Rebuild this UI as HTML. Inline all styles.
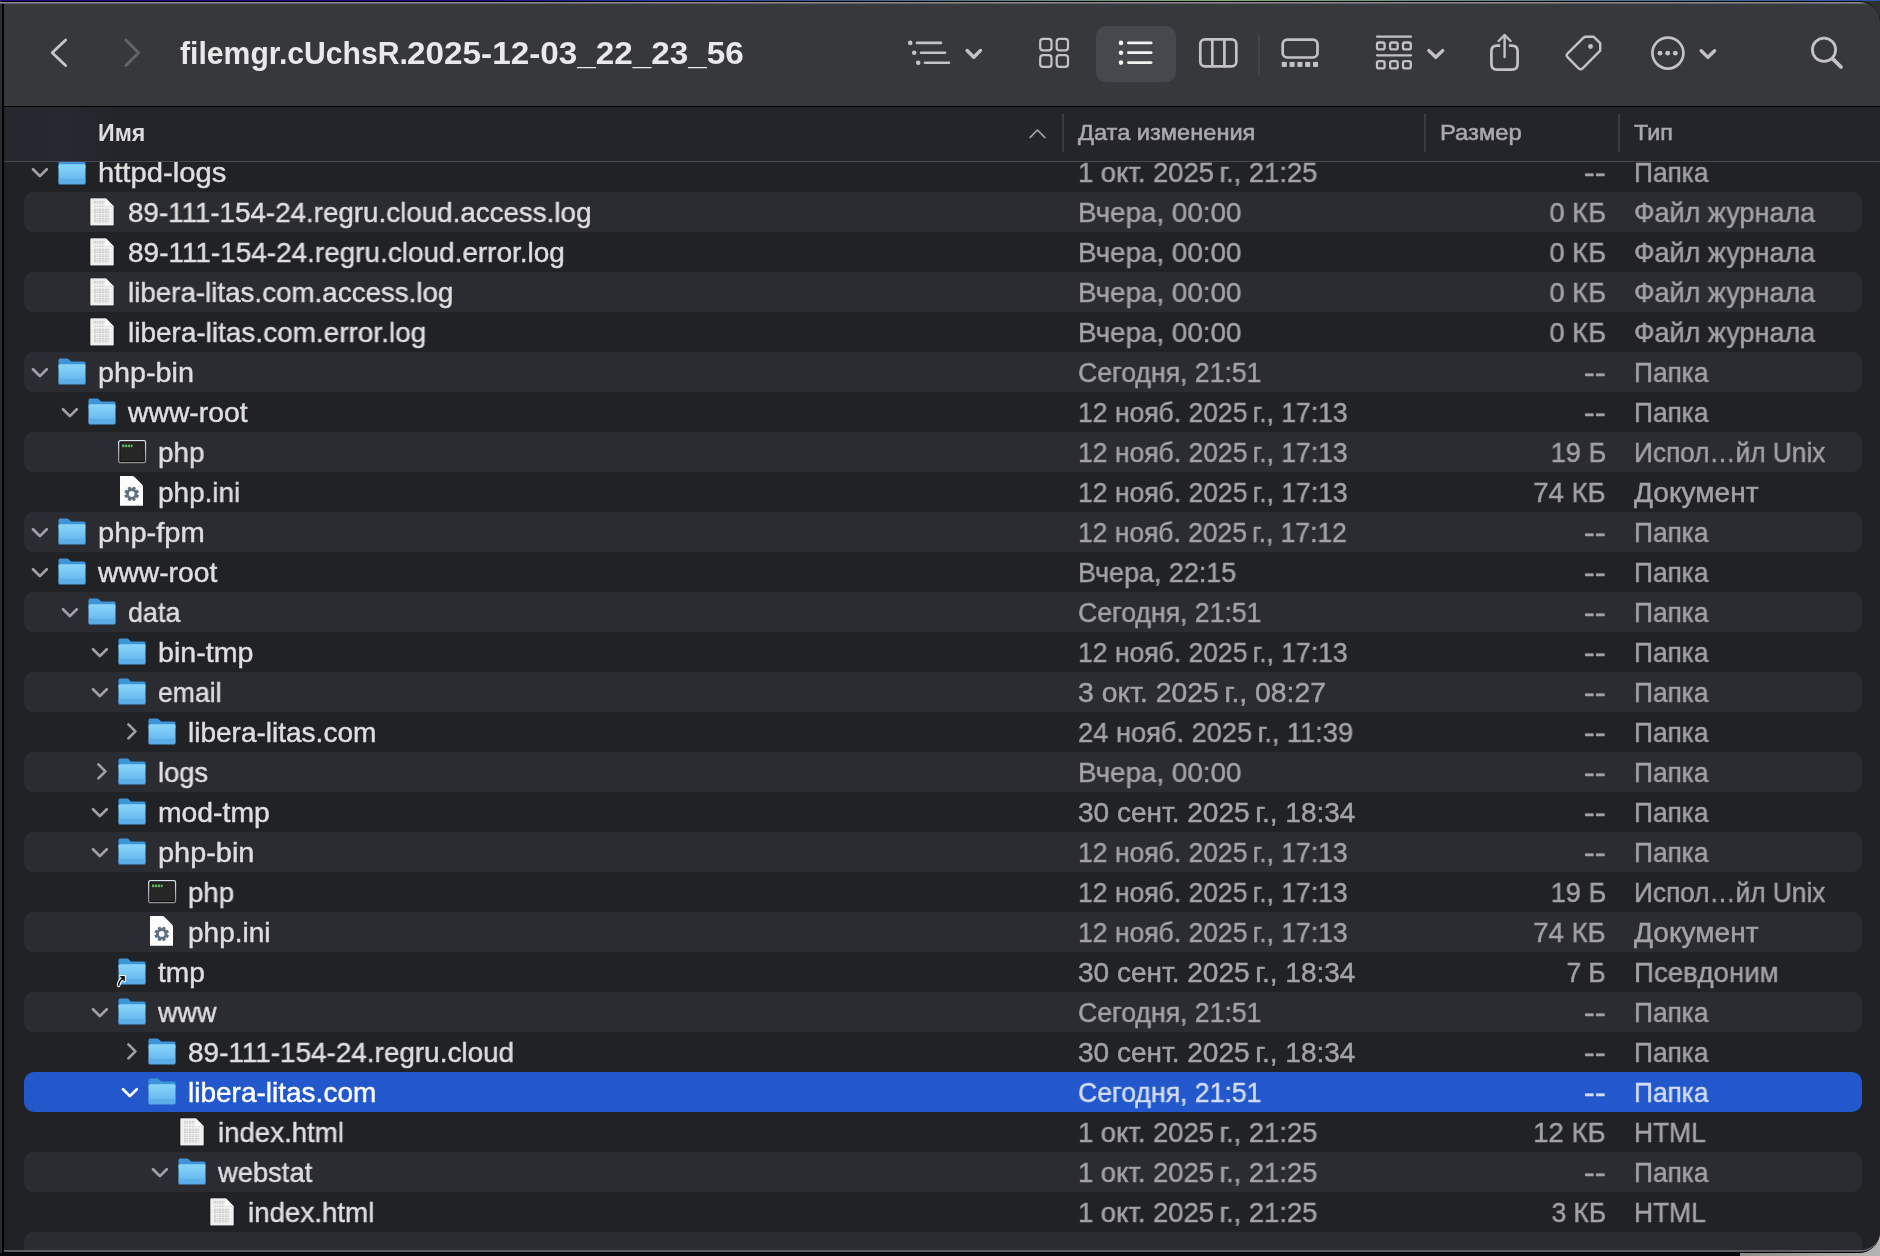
<!DOCTYPE html>
<html><head><meta charset="utf-8"><style>
html,body{margin:0;padding:0;width:1880px;height:1256px;overflow:hidden;background:#06080b;}
#trbg{position:absolute;left:1840px;top:1px;width:40px;height:40px;background:#2f3034;}
#brbg{position:absolute;left:1740px;top:1200px;width:140px;height:56px;background:linear-gradient(90deg,#8c8c8c,#b4b4b4);}
*{box-sizing:border-box;}
.ic{position:absolute;overflow:visible;}
#topline{position:absolute;left:0;top:0;width:1880px;height:1px;background:linear-gradient(90deg,#220a70 0%,#220a70 25%,#1e3aa0 35%,#86ac78 65%,#2756ac 100%);}
#leftbg{position:absolute;left:0;top:1px;width:2px;height:1252px;background:#2b2c30;}
#win{position:absolute;left:2px;top:1px;width:1878px;height:1252px;background:#000;border-radius:0 21px 21px 0;overflow:hidden;}
#inner{position:absolute;left:2px;top:1px;right:0;bottom:1px;background:#212226;border-radius:0 20px 20px 0;overflow:hidden;}
#toolbar{position:absolute;left:0;top:0;width:100%;height:104px;background:linear-gradient(180deg,#8d8d91 0px,#8d8d91 1px,#606165 1px,#606165 2px,#3d3e42 2px,#37383c 4px,#37383c 100%);}
#tbline{position:absolute;left:0;top:104px;width:100%;height:1px;background:#000;}
#header{position:absolute;left:0;top:105px;width:100%;height:55px;background:#24252b;}
#hline{position:absolute;left:0;top:159px;width:100%;height:1px;background:#48494e;}
#list{position:absolute;left:-4px;top:-2px;width:1880px;height:1256px;}
.row{position:absolute;left:24px;width:1838px;height:40px;border-radius:10px;}
.row.alt{background:#2b2c31;}
.row.sel{background:#2358cc;}
.t{position:absolute;height:40px;line-height:40px;transform-origin:left;will-change:transform;-webkit-text-stroke:0.45px currentColor;font-family:"Liberation Sans",sans-serif;font-size:28px;white-space:nowrap;}
.name{color:#dfdfdf;}
.date,.size,.kind{color:#a3a3a6;}
.t.s{color:#d3dcf3;}
.name.s{color:#ffffff;}
.h{position:absolute;top:-2.1px;height:55px;line-height:55px;transform-origin:left;will-change:transform;font-family:"Liberation Sans",sans-serif;font-size:22px;font-weight:400;-webkit-text-stroke:0.55px currentColor;color:#a9a9ad;white-space:nowrap;}
.hsep{position:absolute;top:7px;width:2px;height:38px;background:#3b3c41;}
#title{position:absolute;left:176px;top:-1.2px;height:104px;line-height:104px;will-change:transform;width:1200px;font-family:"Liberation Sans",sans-serif;font-size:32px;font-weight:700;color:#e9e9ea;white-space:nowrap;}
#bottomline{position:absolute;left:0;bottom:0;width:100%;height:22px;border-bottom:2px solid #5e5f64;border-radius:0 0 20px 0;}
</style></head><body>
<div id="topline"></div>
<div id="trbg"></div><div id="brbg"></div>
<div style="position:absolute;left:0;top:2px;width:4px;height:2px;background:linear-gradient(180deg,#8d8d91 50%,#606165 50%);z-index:5"></div>
<div id="leftbg"></div>
<div id="win"><div id="inner">
 <div id="list">
  <svg width="0" height="0" style="position:absolute"><defs>
   <linearGradient id="fg" x1="0" y1="0" x2="0" y2="1"><stop offset="0" stop-color="#8ad6fa"/><stop offset="0.6" stop-color="#6ec0f2"/><stop offset="1" stop-color="#55a8e6"/></linearGradient>
   <linearGradient id="tg" x1="0" y1="0" x2="0" y2="1"><stop offset="0" stop-color="#dce6ee"/><stop offset="1" stop-color="#8f8f8f"/></linearGradient>
  </defs></svg>
  <div class="row" style="top:152px"></div><svg class="ic" style="left:30px;top:165px" width="20" height="14" viewBox="0 0 20 14"><path d="M3 4.2 L9.9 11.1 L16.8 4.2" fill="none" stroke="#a1a1a5" stroke-width="2.7" stroke-linecap="round" stroke-linejoin="round"/></svg><svg class="ic" style="left:57px;top:156px" width="30" height="30" viewBox="0 0 30 30">
<path d="M1.5 4.2 Q1.5 2.6 3.1 2.6 L10 2.6 Q11 2.6 11.7 3.3 L13.2 4.8 Q13.9 5.5 14.9 5.5 L27 5.5 Q28.5 5.5 28.5 7 L28.5 12 L1.5 12 Z" fill="#3f93d8"/>
<rect x="1.5" y="8.2" width="27" height="20.4" rx="1.5" fill="url(#fg)"/>
<rect x="1.5" y="23" width="27" height="3.4" fill="#58a9e3" opacity="0.55"/>
</svg><div class="t name" style="left:98px;top:153px;transform:scaleX(1.0434)">httpd-logs</div><div class="t date" style="left:1078px;top:153px;transform:scaleX(0.9775)">1 окт. 2025 г., 21:25</div><div class="t size" style="right:274px;top:153px;transform:scaleX(1.1778);transform-origin:right">--</div><div class="t kind" style="left:1634px;top:153px;transform:scaleX(0.9387)">Папка</div><div class="row alt" style="top:192px"></div><svg class="ic" style="left:89px;top:197px" width="26" height="30" viewBox="0 0 26 30">
<path d="M1 2.2 Q1 1 2.2 1 L16.6 1 L25 9.4 L25 27.6 Q25 28.8 23.8 28.8 L2.2 28.8 Q1 28.8 1 27.6 Z" fill="#f0f0f0" stroke="#151517" stroke-width="0.6"/>
<path d="M5 4.6 H16" stroke="#a0a0a0" stroke-width="1" stroke-dasharray="2.2 0.6 1.4 0.7 2.6 0.6 1.8 0.8" opacity="0.5"/><path d="M5 6.1 H15" stroke="#a0a0a0" stroke-width="1" stroke-dasharray="2.2 0.6 1.4 0.7 2.6 0.6 1.8 0.8" opacity="0.5"/><path d="M5 9.2 H15.5" stroke="#a0a0a0" stroke-width="1" stroke-dasharray="2.2 0.6 1.4 0.7 2.6 0.6 1.8 0.8" opacity="0.5"/><path d="M5 12.3 H20.5" stroke="#a0a0a0" stroke-width="1" stroke-dasharray="2.2 0.6 1.4 0.7 2.6 0.6 1.8 0.8" opacity="0.5"/><path d="M5 13.9 H20.5" stroke="#a0a0a0" stroke-width="1" stroke-dasharray="2.2 0.6 1.4 0.7 2.6 0.6 1.8 0.8" opacity="0.5"/><path d="M5 15.5 H19.5" stroke="#a0a0a0" stroke-width="1" stroke-dasharray="2.2 0.6 1.4 0.7 2.6 0.6 1.8 0.8" opacity="0.5"/><path d="M5 17.8 H20" stroke="#a0a0a0" stroke-width="1" stroke-dasharray="2.2 0.6 1.4 0.7 2.6 0.6 1.8 0.8" opacity="0.5"/><path d="M5 19.4 H20.5" stroke="#a0a0a0" stroke-width="1" stroke-dasharray="2.2 0.6 1.4 0.7 2.6 0.6 1.8 0.8" opacity="0.5"/><path d="M5 21.6 H20.5" stroke="#a0a0a0" stroke-width="1" stroke-dasharray="2.2 0.6 1.4 0.7 2.6 0.6 1.8 0.8" opacity="0.5"/><path d="M5 23.2 H20.5" stroke="#a0a0a0" stroke-width="1" stroke-dasharray="2.2 0.6 1.4 0.7 2.6 0.6 1.8 0.8" opacity="0.5"/><path d="M5 24.8 H19" stroke="#a0a0a0" stroke-width="1" stroke-dasharray="2.2 0.6 1.4 0.7 2.6 0.6 1.8 0.8" opacity="0.5"/>
<path d="M16.6 1 L16.6 9.4 L25 9.4 Z" fill="#fafafa"/>
<path d="M16.6 9.4 L25 9.4" stroke="#d0d0d0" stroke-width="0.5"/>
</svg><div class="t name" style="left:128px;top:193px;transform:scaleX(0.9914)">89-111-154-24.regru.cloud.access.log</div><div class="t date" style="left:1078px;top:193px;transform:scaleX(0.9927)">Вчера, 00:00</div><div class="t size" style="right:274px;top:193px;transform:scaleX(0.9754);transform-origin:right">0 КБ</div><div class="t kind" style="left:1634px;top:193px;transform:scaleX(0.9644)">Файл журнала</div><div class="row" style="top:232px"></div><svg class="ic" style="left:89px;top:237px" width="26" height="30" viewBox="0 0 26 30">
<path d="M1 2.2 Q1 1 2.2 1 L16.6 1 L25 9.4 L25 27.6 Q25 28.8 23.8 28.8 L2.2 28.8 Q1 28.8 1 27.6 Z" fill="#f0f0f0" stroke="#151517" stroke-width="0.6"/>
<path d="M5 4.6 H16" stroke="#a0a0a0" stroke-width="1" stroke-dasharray="2.2 0.6 1.4 0.7 2.6 0.6 1.8 0.8" opacity="0.5"/><path d="M5 6.1 H15" stroke="#a0a0a0" stroke-width="1" stroke-dasharray="2.2 0.6 1.4 0.7 2.6 0.6 1.8 0.8" opacity="0.5"/><path d="M5 9.2 H15.5" stroke="#a0a0a0" stroke-width="1" stroke-dasharray="2.2 0.6 1.4 0.7 2.6 0.6 1.8 0.8" opacity="0.5"/><path d="M5 12.3 H20.5" stroke="#a0a0a0" stroke-width="1" stroke-dasharray="2.2 0.6 1.4 0.7 2.6 0.6 1.8 0.8" opacity="0.5"/><path d="M5 13.9 H20.5" stroke="#a0a0a0" stroke-width="1" stroke-dasharray="2.2 0.6 1.4 0.7 2.6 0.6 1.8 0.8" opacity="0.5"/><path d="M5 15.5 H19.5" stroke="#a0a0a0" stroke-width="1" stroke-dasharray="2.2 0.6 1.4 0.7 2.6 0.6 1.8 0.8" opacity="0.5"/><path d="M5 17.8 H20" stroke="#a0a0a0" stroke-width="1" stroke-dasharray="2.2 0.6 1.4 0.7 2.6 0.6 1.8 0.8" opacity="0.5"/><path d="M5 19.4 H20.5" stroke="#a0a0a0" stroke-width="1" stroke-dasharray="2.2 0.6 1.4 0.7 2.6 0.6 1.8 0.8" opacity="0.5"/><path d="M5 21.6 H20.5" stroke="#a0a0a0" stroke-width="1" stroke-dasharray="2.2 0.6 1.4 0.7 2.6 0.6 1.8 0.8" opacity="0.5"/><path d="M5 23.2 H20.5" stroke="#a0a0a0" stroke-width="1" stroke-dasharray="2.2 0.6 1.4 0.7 2.6 0.6 1.8 0.8" opacity="0.5"/><path d="M5 24.8 H19" stroke="#a0a0a0" stroke-width="1" stroke-dasharray="2.2 0.6 1.4 0.7 2.6 0.6 1.8 0.8" opacity="0.5"/>
<path d="M16.6 1 L16.6 9.4 L25 9.4 Z" fill="#fafafa"/>
<path d="M16.6 9.4 L25 9.4" stroke="#d0d0d0" stroke-width="0.5"/>
</svg><div class="t name" style="left:128px;top:233px;transform:scaleX(0.9975)">89-111-154-24.regru.cloud.error.log</div><div class="t date" style="left:1078px;top:233px;transform:scaleX(0.9927)">Вчера, 00:00</div><div class="t size" style="right:274px;top:233px;transform:scaleX(0.9754);transform-origin:right">0 КБ</div><div class="t kind" style="left:1634px;top:233px;transform:scaleX(0.9644)">Файл журнала</div><div class="row alt" style="top:272px"></div><svg class="ic" style="left:89px;top:277px" width="26" height="30" viewBox="0 0 26 30">
<path d="M1 2.2 Q1 1 2.2 1 L16.6 1 L25 9.4 L25 27.6 Q25 28.8 23.8 28.8 L2.2 28.8 Q1 28.8 1 27.6 Z" fill="#f0f0f0" stroke="#151517" stroke-width="0.6"/>
<path d="M5 4.6 H16" stroke="#a0a0a0" stroke-width="1" stroke-dasharray="2.2 0.6 1.4 0.7 2.6 0.6 1.8 0.8" opacity="0.5"/><path d="M5 6.1 H15" stroke="#a0a0a0" stroke-width="1" stroke-dasharray="2.2 0.6 1.4 0.7 2.6 0.6 1.8 0.8" opacity="0.5"/><path d="M5 9.2 H15.5" stroke="#a0a0a0" stroke-width="1" stroke-dasharray="2.2 0.6 1.4 0.7 2.6 0.6 1.8 0.8" opacity="0.5"/><path d="M5 12.3 H20.5" stroke="#a0a0a0" stroke-width="1" stroke-dasharray="2.2 0.6 1.4 0.7 2.6 0.6 1.8 0.8" opacity="0.5"/><path d="M5 13.9 H20.5" stroke="#a0a0a0" stroke-width="1" stroke-dasharray="2.2 0.6 1.4 0.7 2.6 0.6 1.8 0.8" opacity="0.5"/><path d="M5 15.5 H19.5" stroke="#a0a0a0" stroke-width="1" stroke-dasharray="2.2 0.6 1.4 0.7 2.6 0.6 1.8 0.8" opacity="0.5"/><path d="M5 17.8 H20" stroke="#a0a0a0" stroke-width="1" stroke-dasharray="2.2 0.6 1.4 0.7 2.6 0.6 1.8 0.8" opacity="0.5"/><path d="M5 19.4 H20.5" stroke="#a0a0a0" stroke-width="1" stroke-dasharray="2.2 0.6 1.4 0.7 2.6 0.6 1.8 0.8" opacity="0.5"/><path d="M5 21.6 H20.5" stroke="#a0a0a0" stroke-width="1" stroke-dasharray="2.2 0.6 1.4 0.7 2.6 0.6 1.8 0.8" opacity="0.5"/><path d="M5 23.2 H20.5" stroke="#a0a0a0" stroke-width="1" stroke-dasharray="2.2 0.6 1.4 0.7 2.6 0.6 1.8 0.8" opacity="0.5"/><path d="M5 24.8 H19" stroke="#a0a0a0" stroke-width="1" stroke-dasharray="2.2 0.6 1.4 0.7 2.6 0.6 1.8 0.8" opacity="0.5"/>
<path d="M16.6 1 L16.6 9.4 L25 9.4 Z" fill="#fafafa"/>
<path d="M16.6 9.4 L25 9.4" stroke="#d0d0d0" stroke-width="0.5"/>
</svg><div class="t name" style="left:128px;top:273px;transform:scaleX(0.9908)">libera-litas.com.access.log</div><div class="t date" style="left:1078px;top:273px;transform:scaleX(0.9927)">Вчера, 00:00</div><div class="t size" style="right:274px;top:273px;transform:scaleX(0.9754);transform-origin:right">0 КБ</div><div class="t kind" style="left:1634px;top:273px;transform:scaleX(0.9644)">Файл журнала</div><div class="row" style="top:312px"></div><svg class="ic" style="left:89px;top:317px" width="26" height="30" viewBox="0 0 26 30">
<path d="M1 2.2 Q1 1 2.2 1 L16.6 1 L25 9.4 L25 27.6 Q25 28.8 23.8 28.8 L2.2 28.8 Q1 28.8 1 27.6 Z" fill="#f0f0f0" stroke="#151517" stroke-width="0.6"/>
<path d="M5 4.6 H16" stroke="#a0a0a0" stroke-width="1" stroke-dasharray="2.2 0.6 1.4 0.7 2.6 0.6 1.8 0.8" opacity="0.5"/><path d="M5 6.1 H15" stroke="#a0a0a0" stroke-width="1" stroke-dasharray="2.2 0.6 1.4 0.7 2.6 0.6 1.8 0.8" opacity="0.5"/><path d="M5 9.2 H15.5" stroke="#a0a0a0" stroke-width="1" stroke-dasharray="2.2 0.6 1.4 0.7 2.6 0.6 1.8 0.8" opacity="0.5"/><path d="M5 12.3 H20.5" stroke="#a0a0a0" stroke-width="1" stroke-dasharray="2.2 0.6 1.4 0.7 2.6 0.6 1.8 0.8" opacity="0.5"/><path d="M5 13.9 H20.5" stroke="#a0a0a0" stroke-width="1" stroke-dasharray="2.2 0.6 1.4 0.7 2.6 0.6 1.8 0.8" opacity="0.5"/><path d="M5 15.5 H19.5" stroke="#a0a0a0" stroke-width="1" stroke-dasharray="2.2 0.6 1.4 0.7 2.6 0.6 1.8 0.8" opacity="0.5"/><path d="M5 17.8 H20" stroke="#a0a0a0" stroke-width="1" stroke-dasharray="2.2 0.6 1.4 0.7 2.6 0.6 1.8 0.8" opacity="0.5"/><path d="M5 19.4 H20.5" stroke="#a0a0a0" stroke-width="1" stroke-dasharray="2.2 0.6 1.4 0.7 2.6 0.6 1.8 0.8" opacity="0.5"/><path d="M5 21.6 H20.5" stroke="#a0a0a0" stroke-width="1" stroke-dasharray="2.2 0.6 1.4 0.7 2.6 0.6 1.8 0.8" opacity="0.5"/><path d="M5 23.2 H20.5" stroke="#a0a0a0" stroke-width="1" stroke-dasharray="2.2 0.6 1.4 0.7 2.6 0.6 1.8 0.8" opacity="0.5"/><path d="M5 24.8 H19" stroke="#a0a0a0" stroke-width="1" stroke-dasharray="2.2 0.6 1.4 0.7 2.6 0.6 1.8 0.8" opacity="0.5"/>
<path d="M16.6 1 L16.6 9.4 L25 9.4 Z" fill="#fafafa"/>
<path d="M16.6 9.4 L25 9.4" stroke="#d0d0d0" stroke-width="0.5"/>
</svg><div class="t name" style="left:128px;top:313px;transform:scaleX(0.9980)">libera-litas.com.error.log</div><div class="t date" style="left:1078px;top:313px;transform:scaleX(0.9927)">Вчера, 00:00</div><div class="t size" style="right:274px;top:313px;transform:scaleX(0.9754);transform-origin:right">0 КБ</div><div class="t kind" style="left:1634px;top:313px;transform:scaleX(0.9644)">Файл журнала</div><div class="row alt" style="top:352px"></div><svg class="ic" style="left:30px;top:365px" width="20" height="14" viewBox="0 0 20 14"><path d="M3 4.2 L9.9 11.1 L16.8 4.2" fill="none" stroke="#a1a1a5" stroke-width="2.7" stroke-linecap="round" stroke-linejoin="round"/></svg><svg class="ic" style="left:57px;top:356px" width="30" height="30" viewBox="0 0 30 30">
<path d="M1.5 4.2 Q1.5 2.6 3.1 2.6 L10 2.6 Q11 2.6 11.7 3.3 L13.2 4.8 Q13.9 5.5 14.9 5.5 L27 5.5 Q28.5 5.5 28.5 7 L28.5 12 L1.5 12 Z" fill="#3f93d8"/>
<rect x="1.5" y="8.2" width="27" height="20.4" rx="1.5" fill="url(#fg)"/>
<rect x="1.5" y="23" width="27" height="3.4" fill="#58a9e3" opacity="0.55"/>
</svg><div class="t name" style="left:98px;top:353px;transform:scaleX(1.0272)">php-bin</div><div class="t date" style="left:1078px;top:353px;transform:scaleX(0.9510)">Сегодня, 21:51</div><div class="t size" style="right:274px;top:353px;transform:scaleX(1.1778);transform-origin:right">--</div><div class="t kind" style="left:1634px;top:353px;transform:scaleX(0.9387)">Папка</div><div class="row" style="top:392px"></div><svg class="ic" style="left:60px;top:405px" width="20" height="14" viewBox="0 0 20 14"><path d="M3 4.2 L9.9 11.1 L16.8 4.2" fill="none" stroke="#a1a1a5" stroke-width="2.7" stroke-linecap="round" stroke-linejoin="round"/></svg><svg class="ic" style="left:87px;top:396px" width="30" height="30" viewBox="0 0 30 30">
<path d="M1.5 4.2 Q1.5 2.6 3.1 2.6 L10 2.6 Q11 2.6 11.7 3.3 L13.2 4.8 Q13.9 5.5 14.9 5.5 L27 5.5 Q28.5 5.5 28.5 7 L28.5 12 L1.5 12 Z" fill="#3f93d8"/>
<rect x="1.5" y="8.2" width="27" height="20.4" rx="1.5" fill="url(#fg)"/>
<rect x="1.5" y="23" width="27" height="3.4" fill="#58a9e3" opacity="0.55"/>
</svg><div class="t name" style="left:128px;top:393px;transform:scaleX(1.0109)">www-root</div><div class="t date" style="left:1078px;top:393px;transform:scaleX(0.9465)">12 нояб. 2025 г., 17:13</div><div class="t size" style="right:274px;top:393px;transform:scaleX(1.1778);transform-origin:right">--</div><div class="t kind" style="left:1634px;top:393px;transform:scaleX(0.9387)">Папка</div><div class="row alt" style="top:432px"></div><svg class="ic" style="left:118px;top:440px" width="30" height="26" viewBox="0 0 30 26">
<rect x="0.7" y="0.7" width="26.8" height="22" rx="1.6" fill="#0a0a0a" stroke="url(#tg)" stroke-width="1.3"/>
<rect x="2.3" y="2.3" width="23.6" height="18.8" fill="#262626"/>
<g fill="#5cba5c"><rect x="4" y="4.6" width="2.3" height="2.6" rx="0.8"/><rect x="6.9" y="4.4" width="2.5" height="2.8" rx="1"/><rect x="9.9" y="4.4" width="2.5" height="2.8" rx="1"/><rect x="13" y="4.6" width="1.6" height="2.6" rx="0.6"/></g>
</svg><div class="t name" style="left:158px;top:433px;transform:scaleX(0.9935)">php</div><div class="t date" style="left:1078px;top:433px;transform:scaleX(0.9465)">12 нояб. 2025 г., 17:13</div><div class="t size" style="right:274px;top:433px;transform:scaleX(0.9709);transform-origin:right">19 Б</div><div class="t kind" style="left:1634px;top:433px;transform:scaleX(0.9363)">Испол…йл Unix</div><div class="row" style="top:472px"></div><svg class="ic" style="left:119px;top:475px" width="26" height="32" viewBox="0 0 26 32">
<path d="M1 1 L13 1 Q14.6 1 15.8 2.2 L22.6 9 Q24 10.4 24 12 L24 30.8 L1 30.8 Z" fill="#fdfdfd"/>
<rect x="11.1" y="11.6" width="3.2" height="3.6" rx="0.6" fill="#5f717d" transform="rotate(22.5 12.7 18.9)"/><rect x="11.1" y="11.6" width="3.2" height="3.6" rx="0.6" fill="#5f717d" transform="rotate(67.5 12.7 18.9)"/><rect x="11.1" y="11.6" width="3.2" height="3.6" rx="0.6" fill="#5f717d" transform="rotate(112.5 12.7 18.9)"/><rect x="11.1" y="11.6" width="3.2" height="3.6" rx="0.6" fill="#5f717d" transform="rotate(157.5 12.7 18.9)"/><rect x="11.1" y="11.6" width="3.2" height="3.6" rx="0.6" fill="#5f717d" transform="rotate(202.5 12.7 18.9)"/><rect x="11.1" y="11.6" width="3.2" height="3.6" rx="0.6" fill="#5f717d" transform="rotate(247.5 12.7 18.9)"/><rect x="11.1" y="11.6" width="3.2" height="3.6" rx="0.6" fill="#5f717d" transform="rotate(292.5 12.7 18.9)"/><rect x="11.1" y="11.6" width="3.2" height="3.6" rx="0.6" fill="#5f717d" transform="rotate(337.5 12.7 18.9)"/>
<circle cx="12.7" cy="18.9" r="4.2" fill="none" stroke="#5f717d" stroke-width="2.7"/>
</svg><div class="t name" style="left:158px;top:473px;transform:scaleX(0.9963)">php.ini</div><div class="t date" style="left:1078px;top:473px;transform:scaleX(0.9465)">12 нояб. 2025 г., 17:13</div><div class="t size" style="right:274px;top:473px;transform:scaleX(0.9836);transform-origin:right">74 КБ</div><div class="t kind" style="left:1634px;top:473px;transform:scaleX(1.0032)">Документ</div><div class="row alt" style="top:512px"></div><svg class="ic" style="left:30px;top:525px" width="20" height="14" viewBox="0 0 20 14"><path d="M3 4.2 L9.9 11.1 L16.8 4.2" fill="none" stroke="#a1a1a5" stroke-width="2.7" stroke-linecap="round" stroke-linejoin="round"/></svg><svg class="ic" style="left:57px;top:516px" width="30" height="30" viewBox="0 0 30 30">
<path d="M1.5 4.2 Q1.5 2.6 3.1 2.6 L10 2.6 Q11 2.6 11.7 3.3 L13.2 4.8 Q13.9 5.5 14.9 5.5 L27 5.5 Q28.5 5.5 28.5 7 L28.5 12 L1.5 12 Z" fill="#3f93d8"/>
<rect x="1.5" y="8.2" width="27" height="20.4" rx="1.5" fill="url(#fg)"/>
<rect x="1.5" y="23" width="27" height="3.4" fill="#58a9e3" opacity="0.55"/>
</svg><div class="t name" style="left:98px;top:513px;transform:scaleX(1.0396)">php-fpm</div><div class="t date" style="left:1078px;top:513px;transform:scaleX(0.9437)">12 нояб. 2025 г., 17:12</div><div class="t size" style="right:274px;top:513px;transform:scaleX(1.1778);transform-origin:right">--</div><div class="t kind" style="left:1634px;top:513px;transform:scaleX(0.9387)">Папка</div><div class="row" style="top:552px"></div><svg class="ic" style="left:30px;top:565px" width="20" height="14" viewBox="0 0 20 14"><path d="M3 4.2 L9.9 11.1 L16.8 4.2" fill="none" stroke="#a1a1a5" stroke-width="2.7" stroke-linecap="round" stroke-linejoin="round"/></svg><svg class="ic" style="left:57px;top:556px" width="30" height="30" viewBox="0 0 30 30">
<path d="M1.5 4.2 Q1.5 2.6 3.1 2.6 L10 2.6 Q11 2.6 11.7 3.3 L13.2 4.8 Q13.9 5.5 14.9 5.5 L27 5.5 Q28.5 5.5 28.5 7 L28.5 12 L1.5 12 Z" fill="#3f93d8"/>
<rect x="1.5" y="8.2" width="27" height="20.4" rx="1.5" fill="url(#fg)"/>
<rect x="1.5" y="23" width="27" height="3.4" fill="#58a9e3" opacity="0.55"/>
</svg><div class="t name" style="left:98px;top:553px;transform:scaleX(1.0084)">www-root</div><div class="t date" style="left:1078px;top:553px;transform:scaleX(0.9610)">Вчера, 22:15</div><div class="t size" style="right:274px;top:553px;transform:scaleX(1.1778);transform-origin:right">--</div><div class="t kind" style="left:1634px;top:553px;transform:scaleX(0.9387)">Папка</div><div class="row alt" style="top:592px"></div><svg class="ic" style="left:60px;top:605px" width="20" height="14" viewBox="0 0 20 14"><path d="M3 4.2 L9.9 11.1 L16.8 4.2" fill="none" stroke="#a1a1a5" stroke-width="2.7" stroke-linecap="round" stroke-linejoin="round"/></svg><svg class="ic" style="left:87px;top:596px" width="30" height="30" viewBox="0 0 30 30">
<path d="M1.5 4.2 Q1.5 2.6 3.1 2.6 L10 2.6 Q11 2.6 11.7 3.3 L13.2 4.8 Q13.9 5.5 14.9 5.5 L27 5.5 Q28.5 5.5 28.5 7 L28.5 12 L1.5 12 Z" fill="#3f93d8"/>
<rect x="1.5" y="8.2" width="27" height="20.4" rx="1.5" fill="url(#fg)"/>
<rect x="1.5" y="23" width="27" height="3.4" fill="#58a9e3" opacity="0.55"/>
</svg><div class="t name" style="left:128px;top:593px;transform:scaleX(0.9600)">data</div><div class="t date" style="left:1078px;top:593px;transform:scaleX(0.9510)">Сегодня, 21:51</div><div class="t size" style="right:274px;top:593px;transform:scaleX(1.1778);transform-origin:right">--</div><div class="t kind" style="left:1634px;top:593px;transform:scaleX(0.9387)">Папка</div><div class="row" style="top:632px"></div><svg class="ic" style="left:90px;top:645px" width="20" height="14" viewBox="0 0 20 14"><path d="M3 4.2 L9.9 11.1 L16.8 4.2" fill="none" stroke="#a1a1a5" stroke-width="2.7" stroke-linecap="round" stroke-linejoin="round"/></svg><svg class="ic" style="left:117px;top:636px" width="30" height="30" viewBox="0 0 30 30">
<path d="M1.5 4.2 Q1.5 2.6 3.1 2.6 L10 2.6 Q11 2.6 11.7 3.3 L13.2 4.8 Q13.9 5.5 14.9 5.5 L27 5.5 Q28.5 5.5 28.5 7 L28.5 12 L1.5 12 Z" fill="#3f93d8"/>
<rect x="1.5" y="8.2" width="27" height="20.4" rx="1.5" fill="url(#fg)"/>
<rect x="1.5" y="23" width="27" height="3.4" fill="#58a9e3" opacity="0.55"/>
</svg><div class="t name" style="left:158px;top:633px;transform:scaleX(1.0215)">bin-tmp</div><div class="t date" style="left:1078px;top:633px;transform:scaleX(0.9465)">12 нояб. 2025 г., 17:13</div><div class="t size" style="right:274px;top:633px;transform:scaleX(1.1778);transform-origin:right">--</div><div class="t kind" style="left:1634px;top:633px;transform:scaleX(0.9387)">Папка</div><div class="row alt" style="top:672px"></div><svg class="ic" style="left:90px;top:685px" width="20" height="14" viewBox="0 0 20 14"><path d="M3 4.2 L9.9 11.1 L16.8 4.2" fill="none" stroke="#a1a1a5" stroke-width="2.7" stroke-linecap="round" stroke-linejoin="round"/></svg><svg class="ic" style="left:117px;top:676px" width="30" height="30" viewBox="0 0 30 30">
<path d="M1.5 4.2 Q1.5 2.6 3.1 2.6 L10 2.6 Q11 2.6 11.7 3.3 L13.2 4.8 Q13.9 5.5 14.9 5.5 L27 5.5 Q28.5 5.5 28.5 7 L28.5 12 L1.5 12 Z" fill="#3f93d8"/>
<rect x="1.5" y="8.2" width="27" height="20.4" rx="1.5" fill="url(#fg)"/>
<rect x="1.5" y="23" width="27" height="3.4" fill="#58a9e3" opacity="0.55"/>
</svg><div class="t name" style="left:158px;top:673px;transform:scaleX(0.9485)">email</div><div class="t date" style="left:1078px;top:673px;transform:scaleX(1.0127)">3 окт. 2025 г., 08:27</div><div class="t size" style="right:274px;top:673px;transform:scaleX(1.1778);transform-origin:right">--</div><div class="t kind" style="left:1634px;top:673px;transform:scaleX(0.9387)">Папка</div><div class="row" style="top:712px"></div><svg class="ic" style="left:123px;top:722px" width="14" height="20" viewBox="0 0 14 20"><path d="M5.4 2.4 L12.4 9.4 L5.4 16.4" fill="none" stroke="#a1a1a5" stroke-width="2.7" stroke-linecap="round" stroke-linejoin="round"/></svg><svg class="ic" style="left:147px;top:716px" width="30" height="30" viewBox="0 0 30 30">
<path d="M1.5 4.2 Q1.5 2.6 3.1 2.6 L10 2.6 Q11 2.6 11.7 3.3 L13.2 4.8 Q13.9 5.5 14.9 5.5 L27 5.5 Q28.5 5.5 28.5 7 L28.5 12 L1.5 12 Z" fill="#3f93d8"/>
<rect x="1.5" y="8.2" width="27" height="20.4" rx="1.5" fill="url(#fg)"/>
<rect x="1.5" y="23" width="27" height="3.4" fill="#58a9e3" opacity="0.55"/>
</svg><div class="t name" style="left:188px;top:713px;transform:scaleX(1.0000)">libera-litas.com</div><div class="t date" style="left:1078px;top:713px;transform:scaleX(0.9730)">24 нояб. 2025 г., 11:39</div><div class="t size" style="right:274px;top:713px;transform:scaleX(1.1778);transform-origin:right">--</div><div class="t kind" style="left:1634px;top:713px;transform:scaleX(0.9387)">Папка</div><div class="row alt" style="top:752px"></div><svg class="ic" style="left:93px;top:762px" width="14" height="20" viewBox="0 0 14 20"><path d="M5.4 2.4 L12.4 9.4 L5.4 16.4" fill="none" stroke="#a1a1a5" stroke-width="2.7" stroke-linecap="round" stroke-linejoin="round"/></svg><svg class="ic" style="left:117px;top:756px" width="30" height="30" viewBox="0 0 30 30">
<path d="M1.5 4.2 Q1.5 2.6 3.1 2.6 L10 2.6 Q11 2.6 11.7 3.3 L13.2 4.8 Q13.9 5.5 14.9 5.5 L27 5.5 Q28.5 5.5 28.5 7 L28.5 12 L1.5 12 Z" fill="#3f93d8"/>
<rect x="1.5" y="8.2" width="27" height="20.4" rx="1.5" fill="url(#fg)"/>
<rect x="1.5" y="23" width="27" height="3.4" fill="#58a9e3" opacity="0.55"/>
</svg><div class="t name" style="left:158px;top:753px;transform:scaleX(0.9765)">logs</div><div class="t date" style="left:1078px;top:753px;transform:scaleX(0.9927)">Вчера, 00:00</div><div class="t size" style="right:274px;top:753px;transform:scaleX(1.1778);transform-origin:right">--</div><div class="t kind" style="left:1634px;top:753px;transform:scaleX(0.9387)">Папка</div><div class="row" style="top:792px"></div><svg class="ic" style="left:90px;top:805px" width="20" height="14" viewBox="0 0 20 14"><path d="M3 4.2 L9.9 11.1 L16.8 4.2" fill="none" stroke="#a1a1a5" stroke-width="2.7" stroke-linecap="round" stroke-linejoin="round"/></svg><svg class="ic" style="left:117px;top:796px" width="30" height="30" viewBox="0 0 30 30">
<path d="M1.5 4.2 Q1.5 2.6 3.1 2.6 L10 2.6 Q11 2.6 11.7 3.3 L13.2 4.8 Q13.9 5.5 14.9 5.5 L27 5.5 Q28.5 5.5 28.5 7 L28.5 12 L1.5 12 Z" fill="#3f93d8"/>
<rect x="1.5" y="8.2" width="27" height="20.4" rx="1.5" fill="url(#fg)"/>
<rect x="1.5" y="23" width="27" height="3.4" fill="#58a9e3" opacity="0.55"/>
</svg><div class="t name" style="left:158px;top:793px;transform:scaleX(1.0118)">mod-tmp</div><div class="t date" style="left:1078px;top:793px;transform:scaleX(1.0004)">30 сент. 2025 г., 18:34</div><div class="t size" style="right:274px;top:793px;transform:scaleX(1.1778);transform-origin:right">--</div><div class="t kind" style="left:1634px;top:793px;transform:scaleX(0.9387)">Папка</div><div class="row alt" style="top:832px"></div><svg class="ic" style="left:90px;top:845px" width="20" height="14" viewBox="0 0 20 14"><path d="M3 4.2 L9.9 11.1 L16.8 4.2" fill="none" stroke="#a1a1a5" stroke-width="2.7" stroke-linecap="round" stroke-linejoin="round"/></svg><svg class="ic" style="left:117px;top:836px" width="30" height="30" viewBox="0 0 30 30">
<path d="M1.5 4.2 Q1.5 2.6 3.1 2.6 L10 2.6 Q11 2.6 11.7 3.3 L13.2 4.8 Q13.9 5.5 14.9 5.5 L27 5.5 Q28.5 5.5 28.5 7 L28.5 12 L1.5 12 Z" fill="#3f93d8"/>
<rect x="1.5" y="8.2" width="27" height="20.4" rx="1.5" fill="url(#fg)"/>
<rect x="1.5" y="23" width="27" height="3.4" fill="#58a9e3" opacity="0.55"/>
</svg><div class="t name" style="left:158px;top:833px;transform:scaleX(1.0326)">php-bin</div><div class="t date" style="left:1078px;top:833px;transform:scaleX(0.9465)">12 нояб. 2025 г., 17:13</div><div class="t size" style="right:274px;top:833px;transform:scaleX(1.1778);transform-origin:right">--</div><div class="t kind" style="left:1634px;top:833px;transform:scaleX(0.9387)">Папка</div><div class="row" style="top:872px"></div><svg class="ic" style="left:148px;top:880px" width="30" height="26" viewBox="0 0 30 26">
<rect x="0.7" y="0.7" width="26.8" height="22" rx="1.6" fill="#0a0a0a" stroke="url(#tg)" stroke-width="1.3"/>
<rect x="2.3" y="2.3" width="23.6" height="18.8" fill="#262626"/>
<g fill="#5cba5c"><rect x="4" y="4.6" width="2.3" height="2.6" rx="0.8"/><rect x="6.9" y="4.4" width="2.5" height="2.8" rx="1"/><rect x="9.9" y="4.4" width="2.5" height="2.8" rx="1"/><rect x="13" y="4.6" width="1.6" height="2.6" rx="0.6"/></g>
</svg><div class="t name" style="left:188px;top:873px;transform:scaleX(0.9848)">php</div><div class="t date" style="left:1078px;top:873px;transform:scaleX(0.9465)">12 нояб. 2025 г., 17:13</div><div class="t size" style="right:274px;top:873px;transform:scaleX(0.9709);transform-origin:right">19 Б</div><div class="t kind" style="left:1634px;top:873px;transform:scaleX(0.9363)">Испол…йл Unix</div><div class="row alt" style="top:912px"></div><svg class="ic" style="left:149px;top:915px" width="26" height="32" viewBox="0 0 26 32">
<path d="M1 1 L13 1 Q14.6 1 15.8 2.2 L22.6 9 Q24 10.4 24 12 L24 30.8 L1 30.8 Z" fill="#fdfdfd"/>
<rect x="11.1" y="11.6" width="3.2" height="3.6" rx="0.6" fill="#5f717d" transform="rotate(22.5 12.7 18.9)"/><rect x="11.1" y="11.6" width="3.2" height="3.6" rx="0.6" fill="#5f717d" transform="rotate(67.5 12.7 18.9)"/><rect x="11.1" y="11.6" width="3.2" height="3.6" rx="0.6" fill="#5f717d" transform="rotate(112.5 12.7 18.9)"/><rect x="11.1" y="11.6" width="3.2" height="3.6" rx="0.6" fill="#5f717d" transform="rotate(157.5 12.7 18.9)"/><rect x="11.1" y="11.6" width="3.2" height="3.6" rx="0.6" fill="#5f717d" transform="rotate(202.5 12.7 18.9)"/><rect x="11.1" y="11.6" width="3.2" height="3.6" rx="0.6" fill="#5f717d" transform="rotate(247.5 12.7 18.9)"/><rect x="11.1" y="11.6" width="3.2" height="3.6" rx="0.6" fill="#5f717d" transform="rotate(292.5 12.7 18.9)"/><rect x="11.1" y="11.6" width="3.2" height="3.6" rx="0.6" fill="#5f717d" transform="rotate(337.5 12.7 18.9)"/>
<circle cx="12.7" cy="18.9" r="4.2" fill="none" stroke="#5f717d" stroke-width="2.7"/>
</svg><div class="t name" style="left:188px;top:913px;transform:scaleX(1.0000)">php.ini</div><div class="t date" style="left:1078px;top:913px;transform:scaleX(0.9465)">12 нояб. 2025 г., 17:13</div><div class="t size" style="right:274px;top:913px;transform:scaleX(0.9836);transform-origin:right">74 КБ</div><div class="t kind" style="left:1634px;top:913px;transform:scaleX(1.0032)">Документ</div><div class="row" style="top:952px"></div><svg class="ic" style="left:117px;top:956px" width="30" height="30" viewBox="0 0 30 30">
<path d="M1.5 4.2 Q1.5 2.6 3.1 2.6 L10 2.6 Q11 2.6 11.7 3.3 L13.2 4.8 Q13.9 5.5 14.9 5.5 L27 5.5 Q28.5 5.5 28.5 7 L28.5 12 L1.5 12 Z" fill="#3f93d8"/>
<rect x="1.5" y="8.2" width="27" height="20.4" rx="1.5" fill="url(#fg)"/>
<rect x="1.5" y="23" width="27" height="3.4" fill="#58a9e3" opacity="0.55"/>
</svg><svg class="ic" style="left:115px;top:971px" width="14" height="16" viewBox="0 0 14 16"><g stroke-linecap="round" stroke-linejoin="round"><path d="M7.6 7.6 Q3.8 10.2 3.6 14.4" fill="none" stroke="#fff" stroke-width="3.6"/><path d="M5.3 5.2 H9.7 V10 Z" fill="#fff" stroke="#fff" stroke-width="2.4"/><path d="M7.6 7.6 Q3.8 10.2 3.6 14.4" fill="none" stroke="#000" stroke-width="1.5"/><path d="M5.6 5.5 H9.4 V9.6 Z" fill="#000" stroke="#000" stroke-width="0.8"/></g></svg><div class="t name" style="left:158px;top:953px;transform:scaleX(1.0043)">tmp</div><div class="t date" style="left:1078px;top:953px;transform:scaleX(1.0004)">30 сент. 2025 г., 18:34</div><div class="t size" style="right:274px;top:953px;transform:scaleX(0.9415);transform-origin:right">7 Б</div><div class="t kind" style="left:1634px;top:953px;transform:scaleX(0.9869)">Псевдоним</div><div class="row alt" style="top:992px"></div><svg class="ic" style="left:90px;top:1005px" width="20" height="14" viewBox="0 0 20 14"><path d="M3 4.2 L9.9 11.1 L16.8 4.2" fill="none" stroke="#a1a1a5" stroke-width="2.7" stroke-linecap="round" stroke-linejoin="round"/></svg><svg class="ic" style="left:117px;top:996px" width="30" height="30" viewBox="0 0 30 30">
<path d="M1.5 4.2 Q1.5 2.6 3.1 2.6 L10 2.6 Q11 2.6 11.7 3.3 L13.2 4.8 Q13.9 5.5 14.9 5.5 L27 5.5 Q28.5 5.5 28.5 7 L28.5 12 L1.5 12 Z" fill="#3f93d8"/>
<rect x="1.5" y="8.2" width="27" height="20.4" rx="1.5" fill="url(#fg)"/>
<rect x="1.5" y="23" width="27" height="3.4" fill="#58a9e3" opacity="0.55"/>
</svg><div class="t name" style="left:158px;top:993px;transform:scaleX(0.9623)">www</div><div class="t date" style="left:1078px;top:993px;transform:scaleX(0.9510)">Сегодня, 21:51</div><div class="t size" style="right:274px;top:993px;transform:scaleX(1.1778);transform-origin:right">--</div><div class="t kind" style="left:1634px;top:993px;transform:scaleX(0.9387)">Папка</div><div class="row" style="top:1032px"></div><svg class="ic" style="left:123px;top:1042px" width="14" height="20" viewBox="0 0 14 20"><path d="M5.4 2.4 L12.4 9.4 L5.4 16.4" fill="none" stroke="#a1a1a5" stroke-width="2.7" stroke-linecap="round" stroke-linejoin="round"/></svg><svg class="ic" style="left:147px;top:1036px" width="30" height="30" viewBox="0 0 30 30">
<path d="M1.5 4.2 Q1.5 2.6 3.1 2.6 L10 2.6 Q11 2.6 11.7 3.3 L13.2 4.8 Q13.9 5.5 14.9 5.5 L27 5.5 Q28.5 5.5 28.5 7 L28.5 12 L1.5 12 Z" fill="#3f93d8"/>
<rect x="1.5" y="8.2" width="27" height="20.4" rx="1.5" fill="url(#fg)"/>
<rect x="1.5" y="23" width="27" height="3.4" fill="#58a9e3" opacity="0.55"/>
</svg><div class="t name" style="left:188px;top:1033px;transform:scaleX(0.9960)">89-111-154-24.regru.cloud</div><div class="t date" style="left:1078px;top:1033px;transform:scaleX(1.0004)">30 сент. 2025 г., 18:34</div><div class="t size" style="right:274px;top:1033px;transform:scaleX(1.1778);transform-origin:right">--</div><div class="t kind" style="left:1634px;top:1033px;transform:scaleX(0.9387)">Папка</div><div class="row sel" style="top:1072px"></div><svg class="ic" style="left:120px;top:1085px" width="20" height="14" viewBox="0 0 20 14"><path d="M3 4.2 L9.9 11.1 L16.8 4.2" fill="none" stroke="#ffffff" stroke-width="2.7" stroke-linecap="round" stroke-linejoin="round"/></svg><svg class="ic" style="left:147px;top:1076px" width="30" height="30" viewBox="0 0 30 30">
<path d="M1.5 4.2 Q1.5 2.6 3.1 2.6 L10 2.6 Q11 2.6 11.7 3.3 L13.2 4.8 Q13.9 5.5 14.9 5.5 L27 5.5 Q28.5 5.5 28.5 7 L28.5 12 L1.5 12 Z" fill="#3f93d8"/>
<rect x="1.5" y="8.2" width="27" height="20.4" rx="1.5" fill="url(#fg)"/>
<rect x="1.5" y="23" width="27" height="3.4" fill="#58a9e3" opacity="0.55"/>
</svg><div class="t name s" style="left:188px;top:1073px;transform:scaleX(0.9995)">libera-litas.com</div><div class="t date s" style="left:1078px;top:1073px;transform:scaleX(0.9510)">Сегодня, 21:51</div><div class="t size s" style="right:274px;top:1073px;transform:scaleX(1.1778);transform-origin:right">--</div><div class="t kind s" style="left:1634px;top:1073px;transform:scaleX(0.9387)">Папка</div><div class="row" style="top:1112px"></div><svg class="ic" style="left:179px;top:1117px" width="26" height="30" viewBox="0 0 26 30">
<path d="M1 2.2 Q1 1 2.2 1 L16.6 1 L25 9.4 L25 27.6 Q25 28.8 23.8 28.8 L2.2 28.8 Q1 28.8 1 27.6 Z" fill="#f0f0f0" stroke="#151517" stroke-width="0.6"/>
<path d="M5 4.6 H16" stroke="#a0a0a0" stroke-width="1" stroke-dasharray="2.2 0.6 1.4 0.7 2.6 0.6 1.8 0.8" opacity="0.5"/><path d="M5 6.1 H15" stroke="#a0a0a0" stroke-width="1" stroke-dasharray="2.2 0.6 1.4 0.7 2.6 0.6 1.8 0.8" opacity="0.5"/><path d="M5 9.2 H15.5" stroke="#a0a0a0" stroke-width="1" stroke-dasharray="2.2 0.6 1.4 0.7 2.6 0.6 1.8 0.8" opacity="0.5"/><path d="M5 12.3 H20.5" stroke="#a0a0a0" stroke-width="1" stroke-dasharray="2.2 0.6 1.4 0.7 2.6 0.6 1.8 0.8" opacity="0.5"/><path d="M5 13.9 H20.5" stroke="#a0a0a0" stroke-width="1" stroke-dasharray="2.2 0.6 1.4 0.7 2.6 0.6 1.8 0.8" opacity="0.5"/><path d="M5 15.5 H19.5" stroke="#a0a0a0" stroke-width="1" stroke-dasharray="2.2 0.6 1.4 0.7 2.6 0.6 1.8 0.8" opacity="0.5"/><path d="M5 17.8 H20" stroke="#a0a0a0" stroke-width="1" stroke-dasharray="2.2 0.6 1.4 0.7 2.6 0.6 1.8 0.8" opacity="0.5"/><path d="M5 19.4 H20.5" stroke="#a0a0a0" stroke-width="1" stroke-dasharray="2.2 0.6 1.4 0.7 2.6 0.6 1.8 0.8" opacity="0.5"/><path d="M5 21.6 H20.5" stroke="#a0a0a0" stroke-width="1" stroke-dasharray="2.2 0.6 1.4 0.7 2.6 0.6 1.8 0.8" opacity="0.5"/><path d="M5 23.2 H20.5" stroke="#a0a0a0" stroke-width="1" stroke-dasharray="2.2 0.6 1.4 0.7 2.6 0.6 1.8 0.8" opacity="0.5"/><path d="M5 24.8 H19" stroke="#a0a0a0" stroke-width="1" stroke-dasharray="2.2 0.6 1.4 0.7 2.6 0.6 1.8 0.8" opacity="0.5"/>
<path d="M16.6 1 L16.6 9.4 L25 9.4 Z" fill="#fafafa"/>
<path d="M16.6 9.4 L25 9.4" stroke="#d0d0d0" stroke-width="0.5"/>
</svg><div class="t name" style="left:218px;top:1113px;transform:scaleX(0.9865)">index.html</div><div class="t date" style="left:1078px;top:1113px;transform:scaleX(0.9775)">1 окт. 2025 г., 21:25</div><div class="t size" style="right:274px;top:1113px;transform:scaleX(0.9847);transform-origin:right">12 КБ</div><div class="t kind" style="left:1634px;top:1113px;transform:scaleX(0.9408)">HTML</div><div class="row alt" style="top:1152px"></div><svg class="ic" style="left:150px;top:1165px" width="20" height="14" viewBox="0 0 20 14"><path d="M3 4.2 L9.9 11.1 L16.8 4.2" fill="none" stroke="#a1a1a5" stroke-width="2.7" stroke-linecap="round" stroke-linejoin="round"/></svg><svg class="ic" style="left:177px;top:1156px" width="30" height="30" viewBox="0 0 30 30">
<path d="M1.5 4.2 Q1.5 2.6 3.1 2.6 L10 2.6 Q11 2.6 11.7 3.3 L13.2 4.8 Q13.9 5.5 14.9 5.5 L27 5.5 Q28.5 5.5 28.5 7 L28.5 12 L1.5 12 Z" fill="#3f93d8"/>
<rect x="1.5" y="8.2" width="27" height="20.4" rx="1.5" fill="url(#fg)"/>
<rect x="1.5" y="23" width="27" height="3.4" fill="#58a9e3" opacity="0.55"/>
</svg><div class="t name" style="left:218px;top:1153px;transform:scaleX(0.9763)">webstat</div><div class="t date" style="left:1078px;top:1153px;transform:scaleX(0.9775)">1 окт. 2025 г., 21:25</div><div class="t size" style="right:274px;top:1153px;transform:scaleX(1.1778);transform-origin:right">--</div><div class="t kind" style="left:1634px;top:1153px;transform:scaleX(0.9387)">Папка</div><div class="row" style="top:1192px"></div><svg class="ic" style="left:209px;top:1197px" width="26" height="30" viewBox="0 0 26 30">
<path d="M1 2.2 Q1 1 2.2 1 L16.6 1 L25 9.4 L25 27.6 Q25 28.8 23.8 28.8 L2.2 28.8 Q1 28.8 1 27.6 Z" fill="#f0f0f0" stroke="#151517" stroke-width="0.6"/>
<path d="M5 4.6 H16" stroke="#a0a0a0" stroke-width="1" stroke-dasharray="2.2 0.6 1.4 0.7 2.6 0.6 1.8 0.8" opacity="0.5"/><path d="M5 6.1 H15" stroke="#a0a0a0" stroke-width="1" stroke-dasharray="2.2 0.6 1.4 0.7 2.6 0.6 1.8 0.8" opacity="0.5"/><path d="M5 9.2 H15.5" stroke="#a0a0a0" stroke-width="1" stroke-dasharray="2.2 0.6 1.4 0.7 2.6 0.6 1.8 0.8" opacity="0.5"/><path d="M5 12.3 H20.5" stroke="#a0a0a0" stroke-width="1" stroke-dasharray="2.2 0.6 1.4 0.7 2.6 0.6 1.8 0.8" opacity="0.5"/><path d="M5 13.9 H20.5" stroke="#a0a0a0" stroke-width="1" stroke-dasharray="2.2 0.6 1.4 0.7 2.6 0.6 1.8 0.8" opacity="0.5"/><path d="M5 15.5 H19.5" stroke="#a0a0a0" stroke-width="1" stroke-dasharray="2.2 0.6 1.4 0.7 2.6 0.6 1.8 0.8" opacity="0.5"/><path d="M5 17.8 H20" stroke="#a0a0a0" stroke-width="1" stroke-dasharray="2.2 0.6 1.4 0.7 2.6 0.6 1.8 0.8" opacity="0.5"/><path d="M5 19.4 H20.5" stroke="#a0a0a0" stroke-width="1" stroke-dasharray="2.2 0.6 1.4 0.7 2.6 0.6 1.8 0.8" opacity="0.5"/><path d="M5 21.6 H20.5" stroke="#a0a0a0" stroke-width="1" stroke-dasharray="2.2 0.6 1.4 0.7 2.6 0.6 1.8 0.8" opacity="0.5"/><path d="M5 23.2 H20.5" stroke="#a0a0a0" stroke-width="1" stroke-dasharray="2.2 0.6 1.4 0.7 2.6 0.6 1.8 0.8" opacity="0.5"/><path d="M5 24.8 H19" stroke="#a0a0a0" stroke-width="1" stroke-dasharray="2.2 0.6 1.4 0.7 2.6 0.6 1.8 0.8" opacity="0.5"/>
<path d="M16.6 1 L16.6 9.4 L25 9.4 Z" fill="#fafafa"/>
<path d="M16.6 9.4 L25 9.4" stroke="#d0d0d0" stroke-width="0.5"/>
</svg><div class="t name" style="left:248px;top:1193px;transform:scaleX(0.9897)">index.html</div><div class="t date" style="left:1078px;top:1193px;transform:scaleX(0.9775)">1 окт. 2025 г., 21:25</div><div class="t size" style="right:274px;top:1193px;transform:scaleX(0.9368);transform-origin:right">3 КБ</div><div class="t kind" style="left:1634px;top:1193px;transform:scaleX(0.9408)">HTML</div><div class="row alt" style="top:1232px"></div>
 </div>
 <div id="header">
  <div style="position:absolute;left:0;top:0;width:112px;height:54px;background:linear-gradient(90deg,rgba(55,75,105,0.07) 0%,rgba(55,75,105,0.09) 55%,rgba(55,75,105,0) 100%)"></div>
  <div class="h" style="left:94px;color:#dcdcdd;font-weight:700;-webkit-text-stroke:0;font-size:23px;top:-1.4px;transform:scaleX(1.0086956521739132)">Имя</div>
  <svg class="ic" style="left:1022px;top:11px" width="24" height="24" viewBox="0 0 24 24"><path d="M4.2 19.4 L11.4 12 L18.7 19.4" fill="none" stroke="#a2a2a6" stroke-width="1.7" stroke-linecap="round" stroke-linejoin="round"/></svg>
  <div class="hsep" style="left:1058px"></div>
  <div class="h" style="left:1074px;transform:scaleX(1.0731707317073171)">Дата изменения</div>
  <div class="hsep" style="left:1420px"></div>
  <div class="h" style="left:1436px;transform:scaleX(1.0813333333333321)">Размер</div>
  <div class="hsep" style="left:1614px"></div>
  <div class="h" style="left:1630px;transform:scaleX(1.0555555555555556)">Тип</div>
 </div>
 <div id="hline"></div>
 <div id="toolbar">
  <div id="title"><span style="position:absolute;left:0;top:0;transform-origin:left;transform:scaleX(0.9425)">filemgr.cUchsR.</span><span style="position:absolute;left:226.66px;top:0;transform-origin:left;transform:scaleX(1.0401)">2025-12-03_22_23_56</span></div>
 </div>
 <div id="tbline"></div>
 <div id="bottomline"></div>
</div></div>
<div style="position:absolute;left:0;top:0;width:1880px;height:106px;pointer-events:none">
<svg class="ic" style="left:0;top:0" width="1880" height="106" viewBox="0 0 1880 106">
 <g fill="none" stroke-linecap="round" stroke-linejoin="round">
  <path d="M65.6 39.9 L52.2 52.7 L65.6 65.5" stroke="#c6c6ca" stroke-width="2.8"/>
  <path d="M125.8 39.9 L138.6 52.7 L125.8 65.5" stroke="#646569" stroke-width="2.8"/>
  <!-- list options -->
  <g stroke="#c3c3c7" stroke-width="2.6">
   <path d="M917 42.9 H941"/><path d="M921 52.8 H945"/><path d="M925 62.7 H949"/>
   <path d="M967.1 50.5 L973.8 57.2 L980.5 50.5" stroke-width="3.4"/>
  </g>
  <g fill="#c3c3c7" stroke="none"><circle cx="910.2" cy="42.9" r="2.3"/><circle cx="914.2" cy="52.8" r="2.3"/><circle cx="918.2" cy="62.7" r="2.3"/></g>
  <!-- grid -->
  <g stroke="#c3c3c7" stroke-width="2.2">
   <rect x="1040.2" y="38.8" width="11.3" height="11.6" rx="2.8"/><rect x="1056.7" y="38.8" width="11.3" height="11.6" rx="2.8"/>
   <rect x="1040.2" y="55.1" width="11.3" height="11.8" rx="2.8"/><rect x="1056.7" y="55.1" width="11.3" height="11.8" rx="2.8"/>
  </g>
  <!-- selected list -->
  <rect x="1096" y="26" width="80" height="56" rx="10" fill="#47484d" stroke="none"/>
  <g stroke="#f2f2f2" stroke-width="2.7"><path d="M1128.4 42.9 H1151.2"/><path d="M1128.4 52.7 H1151.2"/><path d="M1128.4 62.6 H1151.2"/></g>
  <g fill="#f2f2f2" stroke="none"><circle cx="1121" cy="42.9" r="2.3"/><circle cx="1121" cy="52.7" r="2.3"/><circle cx="1121" cy="62.6" r="2.3"/></g>
  <!-- columns -->
  <g stroke="#c3c3c7" stroke-width="2.7">
   <rect x="1200.3" y="39.3" width="36" height="27" rx="4.6"/>
   <path d="M1212.3 39.3 V66.3"/><path d="M1224.4 39.3 V66.3"/>
  </g>
  <path d="M1259 34 V74" stroke="#4b4c51" stroke-width="1.2"/>
  <!-- gallery -->
  <g stroke="#c3c3c7" stroke-width="2.7"><rect x="1282.7" y="39.7" width="34.8" height="17.8" rx="4.6"/></g>
  <g fill="#c3c3c7" stroke="none">
   <rect x="1281.8" y="61.9" width="5" height="5"/><rect x="1289.6" y="61.9" width="5" height="5"/><rect x="1297.4" y="61.9" width="5" height="5"/><rect x="1305.2" y="61.9" width="5" height="5"/><rect x="1313" y="61.9" width="5" height="5"/>
  </g>
  <!-- group -->
  <g stroke="#c3c3c7" stroke-width="2.3">
   <path d="M1377 36.6 H1411"/><path d="M1377 55.3 H1411"/>
   <rect x="1377" y="42.5" width="7.6" height="6.9" rx="2"/><rect x="1390.1" y="42.5" width="7.6" height="6.9" rx="2"/><rect x="1403" y="42.5" width="7.8" height="6.9" rx="2"/>
   <rect x="1377" y="61.2" width="7.6" height="7.2" rx="2"/><rect x="1390.1" y="61.2" width="7.6" height="7.2" rx="2"/><rect x="1403" y="61.2" width="7.8" height="7.2" rx="2"/>
   <path d="M1428.9 50.6 L1435.8 57.3 L1442.7 50.6" stroke-width="3.4"/>
  </g>
  <!-- share -->
  <g stroke="#c3c3c7" stroke-width="2.4">
   <path d="M1500.1 45.7 H1497 Q1491.4 45.7 1491.4 51.3 V64 Q1491.4 69.6 1497 69.6 H1512 Q1517.6 69.6 1517.6 64 V51.3 Q1517.6 45.7 1512 45.7 H1508.9" stroke-width="2.7" stroke-linecap="butt"/>
   <path d="M1504.6 35.5 V57"/><path d="M1498.6 41 L1504.6 35 L1510.6 41"/>
  </g>
  <!-- tag -->
  <g stroke="#c3c3c7" stroke-width="2.4">
   <path d="M1585.5 36.8 H1593.8 L1600.2 43.2 V50.6 L1582.6 68.3 Q1580.6 70.3 1578.6 68.3 L1567.7 57.4 Q1565.7 55.4 1567.7 53.4 L1583.6 37.6 Q1584.4 36.8 1585.5 36.8 Z"/>
  </g>
  <circle cx="1590.5" cy="46.5" r="2.4" fill="#c3c3c7" stroke="none"/>
  <!-- more -->
  <circle cx="1667.9" cy="53.1" r="15.5" stroke="#c3c3c7" stroke-width="2.7"/>
  <g fill="#c3c3c7" stroke="none"><circle cx="1660" cy="53.2" r="2.4"/><circle cx="1667.7" cy="53.2" r="2.4"/><circle cx="1675.3" cy="53.2" r="2.4"/></g>
  <path d="M1701.2 50.8 L1707.9 57.4 L1714.6 50.8" stroke="#c3c3c7" stroke-width="3.4"/>
  <!-- search -->
  <circle cx="1824" cy="49.7" r="11.6" stroke="#c3c3c7" stroke-width="2.8"/>
  <path d="M1832.8 58.8 L1841 67" stroke="#c3c3c7" stroke-width="3.8"/>
 </g>
</svg>
</div>
</body></html>
